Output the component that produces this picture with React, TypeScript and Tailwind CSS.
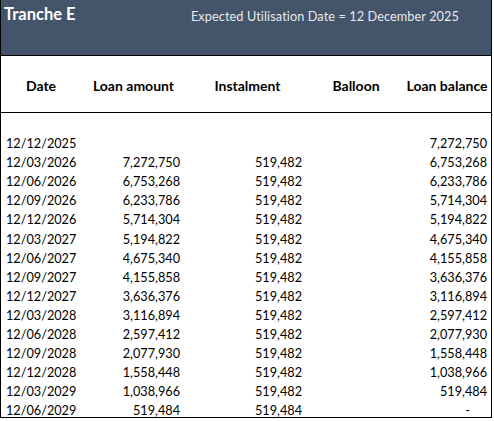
import React from 'react';

type Row = {
  date: string;
  loan?: string;
  instalment?: string;
  balloon?: string;
  balance: string;
};

const rows: Row[] = [
  { date: '12/12/2025', balance: '7,272,750' },
  { date: '12/03/2026', loan: '7,272,750', instalment: '519,482', balance: '6,753,268' },
  { date: '12/06/2026', loan: '6,753,268', instalment: '519,482', balance: '6,233,786' },
  { date: '12/09/2026', loan: '6,233,786', instalment: '519,482', balance: '5,714,304' },
  { date: '12/12/2026', loan: '5,714,304', instalment: '519,482', balance: '5,194,822' },
  { date: '12/03/2027', loan: '5,194,822', instalment: '519,482', balance: '4,675,340' },
  { date: '12/06/2027', loan: '4,675,340', instalment: '519,482', balance: '4,155,858' },
  { date: '12/09/2027', loan: '4,155,858', instalment: '519,482', balance: '3,636,376' },
  { date: '12/12/2027', loan: '3,636,376', instalment: '519,482', balance: '3,116,894' },
  { date: '12/03/2028', loan: '3,116,894', instalment: '519,482', balance: '2,597,412' },
  { date: '12/06/2028', loan: '2,597,412', instalment: '519,482', balance: '2,077,930' },
  { date: '12/09/2028', loan: '2,077,930', instalment: '519,482', balance: '1,558,448' },
  { date: '12/12/2028', loan: '1,558,448', instalment: '519,482', balance: '1,038,966' },
  { date: '12/03/2029', loan: '1,038,966', instalment: '519,482', balance: '519,484' },
  { date: '12/06/2029', loan: '519,484', instalment: '519,484', balance: '-' },
];

const App: React.FC = () => {
  return (
    <div className="w-[494px] h-[421px] bg-white font-['Lato','Liberation_Sans',sans-serif] text-black">
      <div className="w-[492px] h-[418px] border-l border-r border-b border-black flex flex-col overflow-hidden">
        {/* title band */}
        <div className="h-[56px] bg-[#44546a] border-b border-black flex items-start shrink-0">
          <div className="pl-[3px] pt-[3px] text-[16.5px] font-bold text-white leading-[22px]">Tranche E</div>
          <div className="ml-auto mr-[32px] pt-[6px] text-[12.7px] text-[#e8e8ec] leading-[20px] tracking-[0.1px]">
            Expected Utilisation Date = 12 December 2025
          </div>
        </div>

        {/* column headings */}
        <div className="h-[57px] border-b border-black grid grid-cols-[80px_105px_123px_94px_88px] items-center text-[14px] font-bold shrink-0">
          <div className="text-center pt-[2px]">Date</div>
          <div className="text-center pt-[2px]">Loan amount</div>
          <div className="text-center pt-[2px]">Instalment</div>
          <div className="text-center pt-[2px]">Balloon</div>
          <div className="text-center pt-[2px]">Loan balance</div>
        </div>

        {/* schedule */}
        <div className="pt-[21px] text-[12.7px]">
          {rows.map((r) => (
            <div key={r.date} className="h-[19.1px] grid grid-cols-[80px_99px_122px_84px_103px] items-center leading-[19px]">
              <div className="pl-[5px]">{r.date}</div>
              <div className="text-right">{r.loan}</div>
              <div className="text-right">{r.instalment}</div>
              <div className="text-right">{r.balloon}</div>
              <div className={r.balance === '-' ? 'text-right pr-[19px]' : 'text-right pr-[2px]'}>{r.balance}</div>
            </div>
          ))}
        </div>
      </div>
    </div>
  );
};

export default App;
